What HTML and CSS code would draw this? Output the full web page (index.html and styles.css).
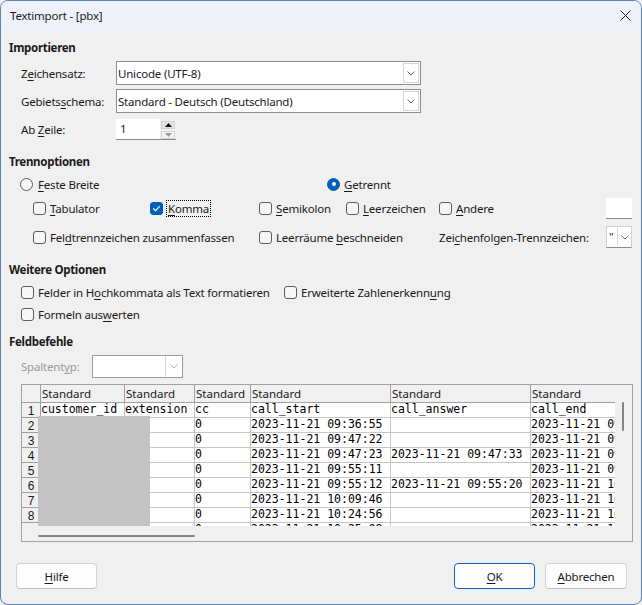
FILE: index.html
```html
<!DOCTYPE html>
<html lang="de">
<head>
<meta charset="utf-8">
<title>Textimport - [pbx]</title>
<link rel="stylesheet" href="styles.css">
</head>
<body>
<div class="window">
  <div class="titlebar">
    <span class="title">Textimport - [pbx]</span>
    <svg class="close" width="11" height="11" viewBox="0 0 11 11"><path d="M0.5 0.5L10.5 10.5M10.5 0.5L0.5 10.5" stroke="#1b1b1b" stroke-width="1" fill="none"/></svg>
  </div>

  <div class="content">
    <div class="heading">Importieren</div>

    <div class="frow">
      <span class="flabel">Z<u>e</u>ichensatz:</span>
      <div class="select"><span class="sv">Unicode (UTF-8)</span><span class="dd"><svg width="8" height="5" viewBox="0 0 8 5"><path d="M0.5 0.5L4 4L7.5 0.5" stroke="#6a6a6a" fill="none"/></svg></span></div>
    </div>
    <div class="frow">
      <span class="flabel">Gebiets<u>s</u>chema:</span>
      <div class="select"><span class="sv">Standard - Deutsch (Deutschland)</span><span class="dd"><svg width="8" height="5" viewBox="0 0 8 5"><path d="M0.5 0.5L4 4L7.5 0.5" stroke="#6a6a6a" fill="none"/></svg></span></div>
    </div>
    <div class="frow spinrow">
      <span class="flabel">Ab <u>Z</u>eile:</span>
      <div class="spin">
        <span class="spin-input">1</span>
        <span class="spin-btns">
          <span class="sb up"><svg width="7" height="4" viewBox="0 0 7 4"><path d="M0 4L3.5 0L7 4Z" fill="#111"/></svg></span>
          <span class="sb down"><svg width="7" height="4" viewBox="0 0 7 4"><path d="M0 0L3.5 4L7 0Z" fill="#9a9a9a"/></svg></span>
        </span>
      </div>
    </div>

    <div class="heading h-gap">Trennoptionen</div>

    <div class="orow radiorow">
      <span class="opt w307"><span class="radio"></span><span><u>F</u>este Breite</span></span>
      <span class="opt"><span class="radio on"></span><span><u>G</u>etrennt</span></span>
    </div>

    <div class="orow cbrow1">
      <span class="opt w117"><span class="cb"></span><span><u>T</u>abulator</span></span>
      <span class="opt w109"><span class="cb on"><svg width="13" height="13" viewBox="0 0 13 13"><path d="M3.6 6.7L5.6 8.6L9.4 4.6" stroke="#fff" stroke-width="1.2" fill="none" stroke-linecap="round" stroke-linejoin="round"/></svg></span><span class="focus"><u>K</u>omma</span></span>
      <span class="opt w87"><span class="cb"></span><span><u>S</u>emikolon</span></span>
      <span class="opt w93"><span class="cb"></span><span><u>L</u>eerzeichen</span></span>
      <span class="opt grow"><span class="cb"></span><span><u>A</u>ndere</span></span>
      <span class="textbox"></span>
    </div>

    <div class="orow cbrow2">
      <span class="opt w226"><span class="cb"></span><span>Fel<u>d</u>trennzeichen zusammenfassen</span></span>
      <span class="opt w180"><span class="cb"></span><span>Leerräume <u>b</u>eschneiden</span></span>
      <span class="opt grow"><span>Zei<u>c</u>henfolgen-Trennzeichen:</span></span>
      <span class="minicombo"><span class="mv">"</span><span class="mdd"><svg width="8" height="5" viewBox="0 0 8 5"><path d="M0.5 0.5L4 4L7.5 0.5" stroke="#6a6a6a" fill="none"/></svg></span></span>
    </div>

    <div class="heading h-gap">Weitere Optionen</div>

    <div class="orow wrow">
      <span class="opt w263"><span class="cb"></span><span>Felder in H<u>o</u>chkommata als Text formatieren</span></span>
      <span class="opt"><span class="cb"></span><span>Erweiterte Zahlenerkenn<u>u</u>ng</span></span>
    </div>
    <div class="orow wrow">
      <span class="opt"><span class="cb"></span><span>Formeln aus<u>w</u>erten</span></span>
    </div>

    <div class="heading h-gap2">Feldbefehle</div>

    <div class="frow typrow">
      <span class="tlabel">Spaltent<u>y</u>p:</span>
      <div class="dcombo"><span class="dv"></span><span class="ddd"><svg width="8" height="5" viewBox="0 0 8 5"><path d="M0.5 0.5L4 4L7.5 0.5" stroke="#b5b5b5" fill="none"/></svg></span></div>
    </div>

    <div class="gridframe">
      <div class="viewport">
        <div class="grid">
          <div class="c hd corner"></div>
          <div class="c hd">Standard</div>
          <div class="c hd">Standard</div>
          <div class="c hd">Standard</div>
          <div class="c hd">Standard</div>
          <div class="c hd">Standard</div>
          <div class="c hd">Standard</div>

          <div class="c rn">1</div><div class="c d">customer_id</div><div class="c d">extension</div><div class="c d">cc</div><div class="c d">call_start</div><div class="c d">call_answer</div><div class="c d">call_end</div>
          <div class="c rn">2</div><div class="c d"></div><div class="c d"></div><div class="c d">0</div><div class="c d">2023-11-21 09:36:55</div><div class="c d"></div><div class="c d">2023-11-21 09:37:06</div>
          <div class="c rn">3</div><div class="c d"></div><div class="c d"></div><div class="c d">0</div><div class="c d">2023-11-21 09:47:22</div><div class="c d"></div><div class="c d">2023-11-21 09:47:30</div>
          <div class="c rn">4</div><div class="c d"></div><div class="c d"></div><div class="c d">0</div><div class="c d">2023-11-21 09:47:23</div><div class="c d">2023-11-21 09:47:33</div><div class="c d">2023-11-21 09:48:12</div>
          <div class="c rn">5</div><div class="c d"></div><div class="c d"></div><div class="c d">0</div><div class="c d">2023-11-21 09:55:11</div><div class="c d"></div><div class="c d">2023-11-21 09:55:19</div>
          <div class="c rn">6</div><div class="c d"></div><div class="c d"></div><div class="c d">0</div><div class="c d">2023-11-21 09:55:12</div><div class="c d">2023-11-21 09:55:20</div><div class="c d">2023-11-21 10:01:44</div>
          <div class="c rn">7</div><div class="c d"></div><div class="c d"></div><div class="c d">0</div><div class="c d">2023-11-21 10:09:46</div><div class="c d"></div><div class="c d">2023-11-21 10:10:01</div>
          <div class="c rn">8</div><div class="c d"></div><div class="c d"></div><div class="c d">0</div><div class="c d">2023-11-21 10:24:56</div><div class="c d"></div><div class="c d">2023-11-21 10:25:05</div>
          <div class="c rn">9</div><div class="c d"></div><div class="c d"></div><div class="c d">0</div><div class="c d">2023-11-21 10:25:08</div><div class="c d"></div><div class="c d">2023-11-21 10:25:30</div>
        </div>
        <div class="redact"></div>
      </div>
      <div class="vscroll"><span class="vthumb"></span></div>
      <div class="hscroll"><span class="hthumb"></span></div>
      <div class="corner2"></div>
    </div>
  </div>

  <div class="footer">
    <button class="btn"><u>H</u>ilfe</button>
    <div class="rbtns">
      <button class="btn ok"><u>O</u>K</button>
      <button class="btn"><u>A</u>bbrechen</button>
    </div>
  </div>
</div>
</body>
</html>
```

FILE: styles.css
```css
* { box-sizing: border-box; }
html, body { margin: 0; padding: 0; }
body {
  width: 642px;
  height: 605px;
  overflow: hidden;
  background: #f0f0f0;
  font-family: "Noto Sans", "DejaVu Sans", sans-serif;
  font-size: 11.5px;
  letter-spacing: -0.2px;
  color: #1a1a1a;
}
u { text-decoration: underline; text-underline-offset: 2px; text-decoration-thickness: 1px; }

.window {
  width: 642px;
  height: 605px;
  border: 1px solid #5d82b6;
  border-radius: 8px;
  background: #f0f0f0;
  display: flex;
  flex-direction: column;
  overflow: hidden;
}

.titlebar {
  height: 30px;
  flex: none;
  background: #eef2f8;
  display: flex;
  align-items: center;
  justify-content: space-between;
  padding: 0 10px 1px 9px;
}
.title { font-size: 11.5px; color: #1b1b1b; }
.close { display: block; }

.content {
  padding: 8px 9px 0 8px;
  flex: none;
}

.heading {
  font-weight: bold;
  height: 18px;
  line-height: 18px;
  letter-spacing: -0.3px;
  color: #1a1a1a;
}
.h-gap { margin-top: 13px; }
.h-gap2 { margin-top: 10px; }

.frow {
  display: flex;
  align-items: center;
  height: 24px;
  margin-top: 4px;
  padding-left: 12px;
}
.flabel { width: 95px; flex: none; }

.select {
  width: 305px;
  height: 24px;
  border: 1px solid #8d8d8d;
  background: #fff;
  display: flex;
  align-items: center;
  justify-content: space-between;
  padding: 0 1px 0 1px;
}
.sv { white-space: nowrap; }
.dd {
  width: 16px;
  height: 20px;
  border: 1px solid #d6d6d6;
  display: flex;
  align-items: center;
  justify-content: center;
}

.spinrow { height: 21px; margin-top: 6px; }
.spin {
  display: flex;
  width: 60px;
  height: 21px;
  border-bottom: 1px solid #8a8a8a;
}
.spin-input {
  width: 44px;
  background: #fff;
  padding-left: 4px;
  line-height: 20px;
}
.spin-btns {
  width: 16px;
  display: flex;
  flex-direction: column;
  gap: 2px;
  padding: 2px 1px 0 1px;
  background: #f0f0f0;
}
.sb {
  height: 8px;
  display: flex;
  align-items: center;
  justify-content: center;
  border: 1px solid #d2d2d2;
}
.sb.up { background: #e2e2e2; }
.sb.down { background: #f2f2f2; }

.orow {
  display: flex;
  align-items: center;
}
.radiorow { height: 18px; margin-top: 4px; padding-left: 11px; }
.cbrow1 { height: 22px; margin-top: 4px; padding-left: 24px; }
.cbrow2 { height: 22px; margin-top: 7px; padding-left: 24px; }
.wrow { height: 18px; margin-top: 4px; padding-left: 12px; }

.opt {
  display: flex;
  align-items: center;
  gap: 4px;
  white-space: nowrap;
  flex: none;
}
.grow { flex: 1; }
.w307 { width: 307px; gap: 5px; }
.w117 { width: 117px; }
.w109 { width: 109px; }
.w87 { width: 87px; }
.w93 { width: 93px; }
.w226 { width: 226px; }
.w180 { width: 180px; }
.w263 { width: 263px; }

.radio {
  width: 13px;
  height: 13px;
  border-radius: 50%;
  border: 1px solid #5e5e5e;
  background: #f6f6f6;
  flex: none;
  position: relative;
}
.radio.on {
  background: #005fb8;
  border-color: #005fb8;
}
.radio.on::after {
  content: "";
  position: absolute;
  left: 3.5px;
  top: 3.5px;
  width: 4px;
  height: 4px;
  border-radius: 50%;
  background: #fff;
}

.cb {
  width: 13px;
  height: 13px;
  border: 1px solid #5e5e5e;
  border-radius: 3px;
  background: #f6f6f6;
  flex: none;
  display: block;
}
.cb.on {
  background: #005fb8;
  border-color: #005fb8;
  position: relative;
}
.cb.on svg { position: absolute; left: -1px; top: -1px; }

.focus {
  border: 1px dotted #000;
  padding: 0 1px;
  line-height: 15px;
  margin-left: -1px;
}

.textbox {
  width: 26px;
  height: 21px;
  background: #fff;
  border-bottom: 1px solid #8a8a8a;
  flex: none;
}
.minicombo {
  width: 26px;
  height: 22px;
  background: #fff;
  border: 1px solid #d0d0d0;
  border-bottom-color: #8a8a8a;
  display: flex;
  align-items: center;
  flex: none;
}
.mv { width: 10px; padding-left: 2px; line-height: 18px; }
.mdd {
  width: 14px;
  height: 18px;
  border-left: 1px solid #d6d6d6;
  display: flex;
  align-items: center;
  justify-content: center;
}

.typrow { height: 23px; margin-top: 4px; }
.tlabel { width: 71px; color: #9a9a9a; flex: none; }
.dcombo {
  width: 91px;
  height: 23px;
  border: 1px solid #9c9c9c;
  background: #fff;
  display: flex;
}
.dv { flex: 1; }
.ddd {
  width: 17px;
  border-left: 1px solid #d8d8d8;
  display: flex;
  align-items: center;
  justify-content: center;
}

.gridframe {
  margin-top: 6px;
  margin-left: 12px;
  width: 612px;
  height: 158px;
  border: 1px solid #a2a2a2;
  display: grid;
  grid-template-columns: 593px 17px;
  grid-template-rows: 141px 15px;
  background: #f0f0f0;
}
.viewport {
  position: relative;
  overflow: hidden;
  background: #f0f0f0;
}
.grid {
  display: grid;
  grid-template-columns: 19px 84px 70px 56px 140px 140px 140px;
  grid-template-rows: 18px repeat(9, 15px);
  width: 649px;
}
.c {
  border-right: 1px solid #c6c6c6;
  border-bottom: 1px solid #c6c6c6;
  white-space: nowrap;
}
.hd {
  background: #f0f0f0;
  border-right-color: #a0a0a0;
  border-bottom-color: #a0a0a0;
  line-height: 17px;
  padding-left: 1px;
  font-size: 11.5px;
  letter-spacing: 0;
  overflow: hidden;
}
.rn {
  background: #f0f0f0;
  border-right-color: #a0a0a0;
  border-bottom-color: #a0a0a0;
  text-align: center;
  font-family: "Liberation Sans", Arial, sans-serif;
  font-size: 12px;
  line-height: 15px;
  padding-top: 1px;
  letter-spacing: 0;
  overflow: hidden;
}
.d {
  background: #fff;
  font-family: "DejaVu Sans Mono", "Liberation Mono", monospace;
  font-size: 11.5px;
  line-height: 13px;
  letter-spacing: 0;
  color: #000;
}
.redact {
  position: absolute;
  left: 16px;
  top: 31px;
  width: 112px;
  height: 110px;
  background: #c3c3c3;
}
.vscroll {
  position: relative;
  background: #f0f0f0;
}
.vthumb {
  position: absolute;
  left: 7px;
  top: 17px;
  width: 2px;
  height: 29px;
  border-radius: 1px;
  background: #858585;
}
.hscroll {
  position: relative;
  background: #f0f0f0;
}
.hthumb {
  position: absolute;
  left: 16px;
  top: 9px;
  width: 157px;
  height: 2px;
  border-radius: 1px;
  background: #858585;
}
.corner2 { background: #f0f0f0; }

.footer {
  margin-top: 21px;
  padding: 0 14px 0 15px;
  display: flex;
  justify-content: space-between;
  flex: none;
}
.rbtns { display: flex; gap: 10px; }
.btn {
  width: 81px;
  height: 26px;
  background: #fdfdfd;
  border: 1px solid #d3d3d3;
  border-bottom-color: #c2c2c2;
  border-radius: 4px;
  font-family: "Noto Sans", "DejaVu Sans", sans-serif;
  font-size: 11.5px;
  letter-spacing: -0.2px;
  color: #1a1a1a;
  padding: 0;
}
.btn.ok { border-color: #0a64bc; }
.rbtns .btn:last-child { width: 82px; }
```
